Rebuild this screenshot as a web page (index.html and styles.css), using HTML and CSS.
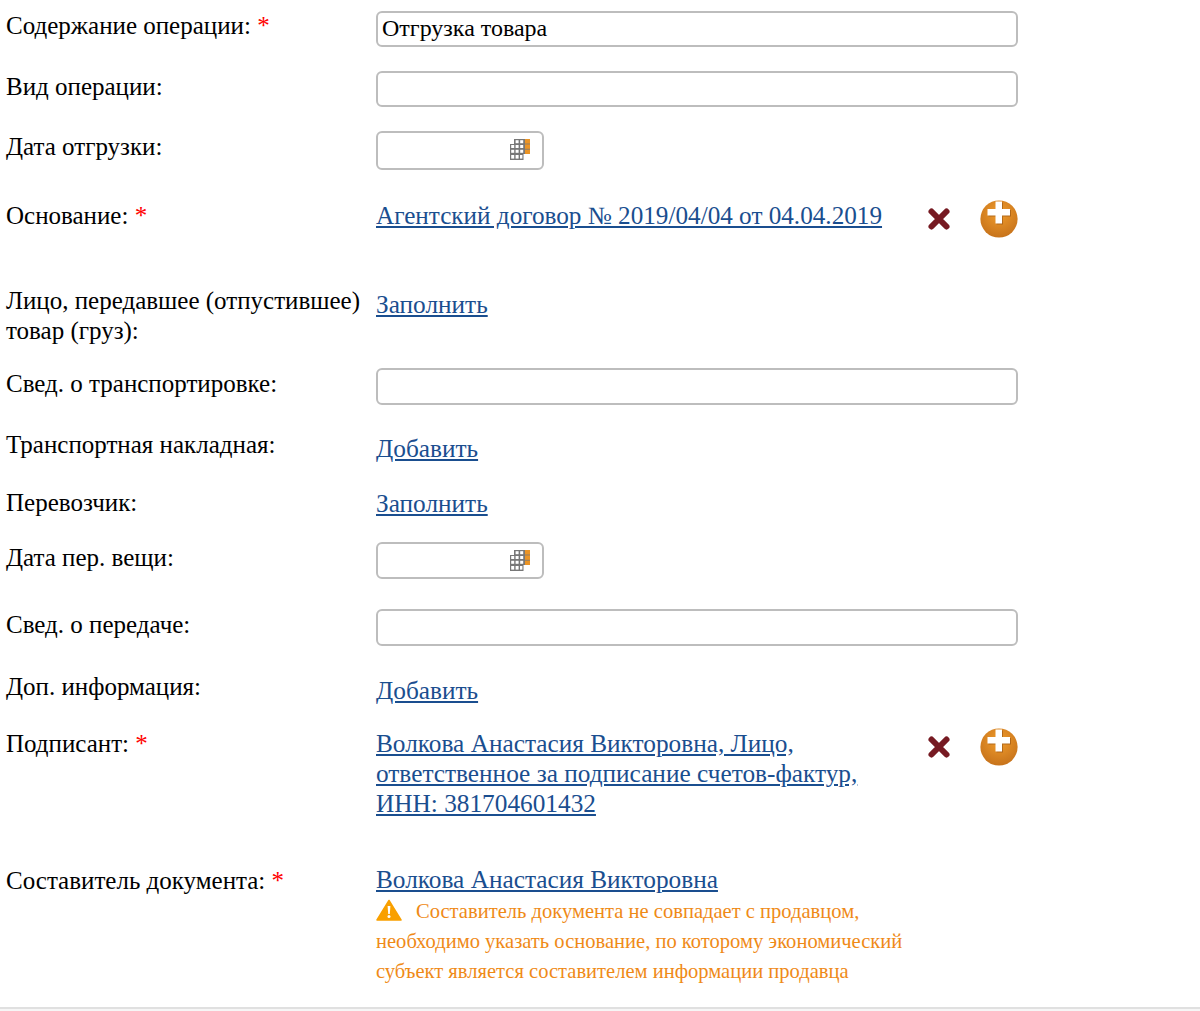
FILE: index.html
```html
<!DOCTYPE html>
<html lang="ru">
<head>
<meta charset="utf-8">
<title>Форма</title>
<link rel="stylesheet" href="styles.css">
</head>
<body>
<svg class="defs" width="0" height="0" aria-hidden="true">
  <defs>
    <radialGradient id="orange" cx="50%" cy="35%" r="70%">
      <stop offset="0" stop-color="#f09c2c"/>
      <stop offset="1" stop-color="#c4701a"/>
    </radialGradient>
    <symbol id="cal" viewBox="0 0 20 21">
      <path d="M4 0h16v15h-6.500v6H0V5h4z" fill="#777"/>
      <g fill="#fff">
        <rect x="5.600" y="1.200" width="3" height="3"/><rect x="10.200" y="1.200" width="3" height="3"/>
        <rect x="1.200" y="6" width="3" height="3"/><rect x="5.600" y="6" width="3" height="3"/><rect x="10.200" y="6" width="3" height="3"/>
        <rect x="1.200" y="10.800" width="3" height="3"/><rect x="5.600" y="10.800" width="3" height="3"/><rect x="10.200" y="10.800" width="3" height="3"/>
        <rect x="1.200" y="16" width="3" height="3.600"/><rect x="5.600" y="16" width="3" height="3.600"/><rect x="10" y="16" width="2.400" height="3.600"/>
      </g>
      <g fill="#ea9426">
        <rect x="15" y="0" width="5" height="4.600"/><rect x="15" y="5.400" width="5" height="4.400"/><rect x="15" y="10.600" width="5" height="4.400"/>
      </g>
    </symbol>
    <symbol id="del" viewBox="0 0 24 24">
      <path d="M4.500 4.500l15 15M19.500 4.500l-15 15" stroke="#761a22" stroke-width="6" stroke-linecap="round" fill="none"/>
    </symbol>
    <symbol id="add" viewBox="0 0 38 38">
      <circle cx="19" cy="19" r="18.600" fill="url(#orange)"/>
      <path d="M16.500 2.500h6.500v7.500h8v6.500h-8v8h-6.500v-8h-8v-6.500h8z" fill="#8a4a10" opacity=".55"/>
      <path d="M15.500 1.500h6.500v7.500h8v6.500h-8v8h-6.500v-8h-8V9h8z" fill="#fff"/>
    </symbol>
  </defs>
</svg>
<form class="form">
  <div class="row r1">
    <div class="label">Содержание операции: <span class="req">*</span></div>
    <div class="field"><input class="text" type="text" value="Отгрузка товара"></div>
  </div>
  <div class="row r2">
    <div class="label">Вид операции:</div>
    <div class="field"><input class="text" type="text"></div>
  </div>
  <div class="row r3">
    <div class="label">Дата отгрузки:</div>
    <div class="field"><div class="date"><svg class="cal"><use href="#cal"/></svg></div></div>
  </div>
  <div class="row r4">
    <div class="label">Основание: <span class="req">*</span></div>
    <div class="field linked">
      <a class="link" href="#">Агентский договор № 2019/04/04 от 04.04.2019</a>
      <div class="actions"><svg class="del"><use href="#del"/></svg><svg class="add"><use href="#add"/></svg></div>
    </div>
  </div>
  <div class="row r5">
    <div class="label">Лицо, передавшее (отпустившее) товар (груз):</div>
    <div class="field"><a class="link" href="#">Заполнить</a></div>
  </div>
  <div class="row r6">
    <div class="label">Свед. о транспортировке:</div>
    <div class="field"><input class="text" type="text"></div>
  </div>
  <div class="row r7">
    <div class="label">Транспортная накладная:</div>
    <div class="field"><a class="link" href="#">Добавить</a></div>
  </div>
  <div class="row r8">
    <div class="label">Перевозчик:</div>
    <div class="field"><a class="link" href="#">Заполнить</a></div>
  </div>
  <div class="row r9">
    <div class="label">Дата пер. вещи:</div>
    <div class="field"><div class="date"><svg class="cal"><use href="#cal"/></svg></div></div>
  </div>
  <div class="row r10">
    <div class="label">Свед. о передаче:</div>
    <div class="field"><input class="text" type="text"></div>
  </div>
  <div class="row r11">
    <div class="label">Доп. информация:</div>
    <div class="field"><a class="link" href="#">Добавить</a></div>
  </div>
  <div class="row r12">
    <div class="label">Подписант: <span class="req">*</span></div>
    <div class="field linked">
      <a class="link signer" href="#">Волкова Анастасия Викторовна, Лицо, ответственное за подписание счетов-фактур, ИНН: 381704601432</a>
      <div class="actions"><svg class="del"><use href="#del"/></svg><svg class="add"><use href="#add"/></svg></div>
    </div>
  </div>
  <div class="row r13">
    <div class="label">Составитель документа: <span class="req">*</span></div>
    <div class="field">
      <a class="link" href="#">Волкова Анастасия Викторовна</a>
      <p class="warn"><svg class="warn-icon" viewBox="0 0 26 22"><path d="M13 1.500L25 21H1z" fill="#f9a000" stroke="#f9a000" stroke-width="1.500" stroke-linejoin="round"/><path d="M11.600 7h2.800l-.6 8h-1.600z" fill="#fff"/><circle cx="13" cy="17.600" r="1.500" fill="#fff"/></svg>Составитель документа не совпадает с продавцом, необходимо указать основание, по которому экономический субъект является составителем информации продавца</p>
    </div>
  </div>
</form>
<div class="rule"></div>
</body>
</html>
```

FILE: styles.css
```css
html, body { margin: 0; padding: 0; background: #fff; }
body { height: 1011px; overflow: hidden; font-family: "Liberation Serif", "Times New Roman", serif; color: #000; }
.defs { display: block; height: 0; }
.form { height: 1007px; overflow: hidden; }
.rule { height: 4px; box-sizing: border-box; border-top: 2px solid #e0e0e0; background: #f6f6f6; }
.row { display: grid; grid-template-columns: 370px 642px; padding-left: 6px; box-sizing: border-box; }
.label { font-size: 25px; line-height: 30px; width: 360px; padding-top: 1px; }
.req { color: #f00; }
.field { font-size: 25.300px; line-height: 30px; }
.text { display: block; width: 642px; height: 37px; box-sizing: border-box; border: 2px solid #bdbdbd; border-radius: 6px; padding: 0 4px 2px; font: 24px "Liberation Serif", serif; color: #000; background: #fff; outline: none; }
.date { position: relative; width: 168px; height: 39px; box-sizing: border-box; border: 2px solid #bdbdbd; border-radius: 6px; background: #fff; }
.cal { position: absolute; right: 12px; top: 6px; width: 20px; height: 21px; }
.link { color: #1a4e8f; text-decoration: underline; }
.linked { display: grid; grid-template-columns: 530px 112px; }
.signer { display: block; width: 500px; }
.actions { display: flex; justify-content: space-between; align-items: flex-start; }
.del { width: 24px; height: 24px; margin: 7px 0 0 21px; }
.add { width: 38px; height: 38px; }
.warn { margin: 2px 0 0; width: 560px; font-size: 20.550px; line-height: 30px; color: #ef8a17; }
.warn-icon { width: 26px; height: 22px; vertical-align: -3px; margin-right: 14px; }
.r1 { padding-top: 11px; height: 71px; }
.r1 .label, .r7 .label { padding-top: 0; }
.r1 .text, .r2 .text { height: 36px; }
.r2 { height: 60px; }
.r3 { height: 69px; }
.r4 { height: 85px; }
.r4 .field { font-size: 25.200px; padding-top: 1px; }
.r4 .actions { margin-top: -1px; }
.r5 { height: 83px; }
.r5 .field { padding-top: 4px; }
.r6 { height: 62px; }
.r7 { height: 57px; }
.r7 .field { padding-top: 3px; }
.r8 { height: 55px; }
.r8 .field { padding-top: 1px; }
.r9 { height: 67px; }
.r9 .date { height: 37px; }
.r10 { height: 62px; }
.r11 { height: 57px; }
.r11 .field { padding-top: 4px; }
.r12 { height: 136px; }
.r13 { height: 141px; }
.r13 .label { padding-top: 2px; }
```
